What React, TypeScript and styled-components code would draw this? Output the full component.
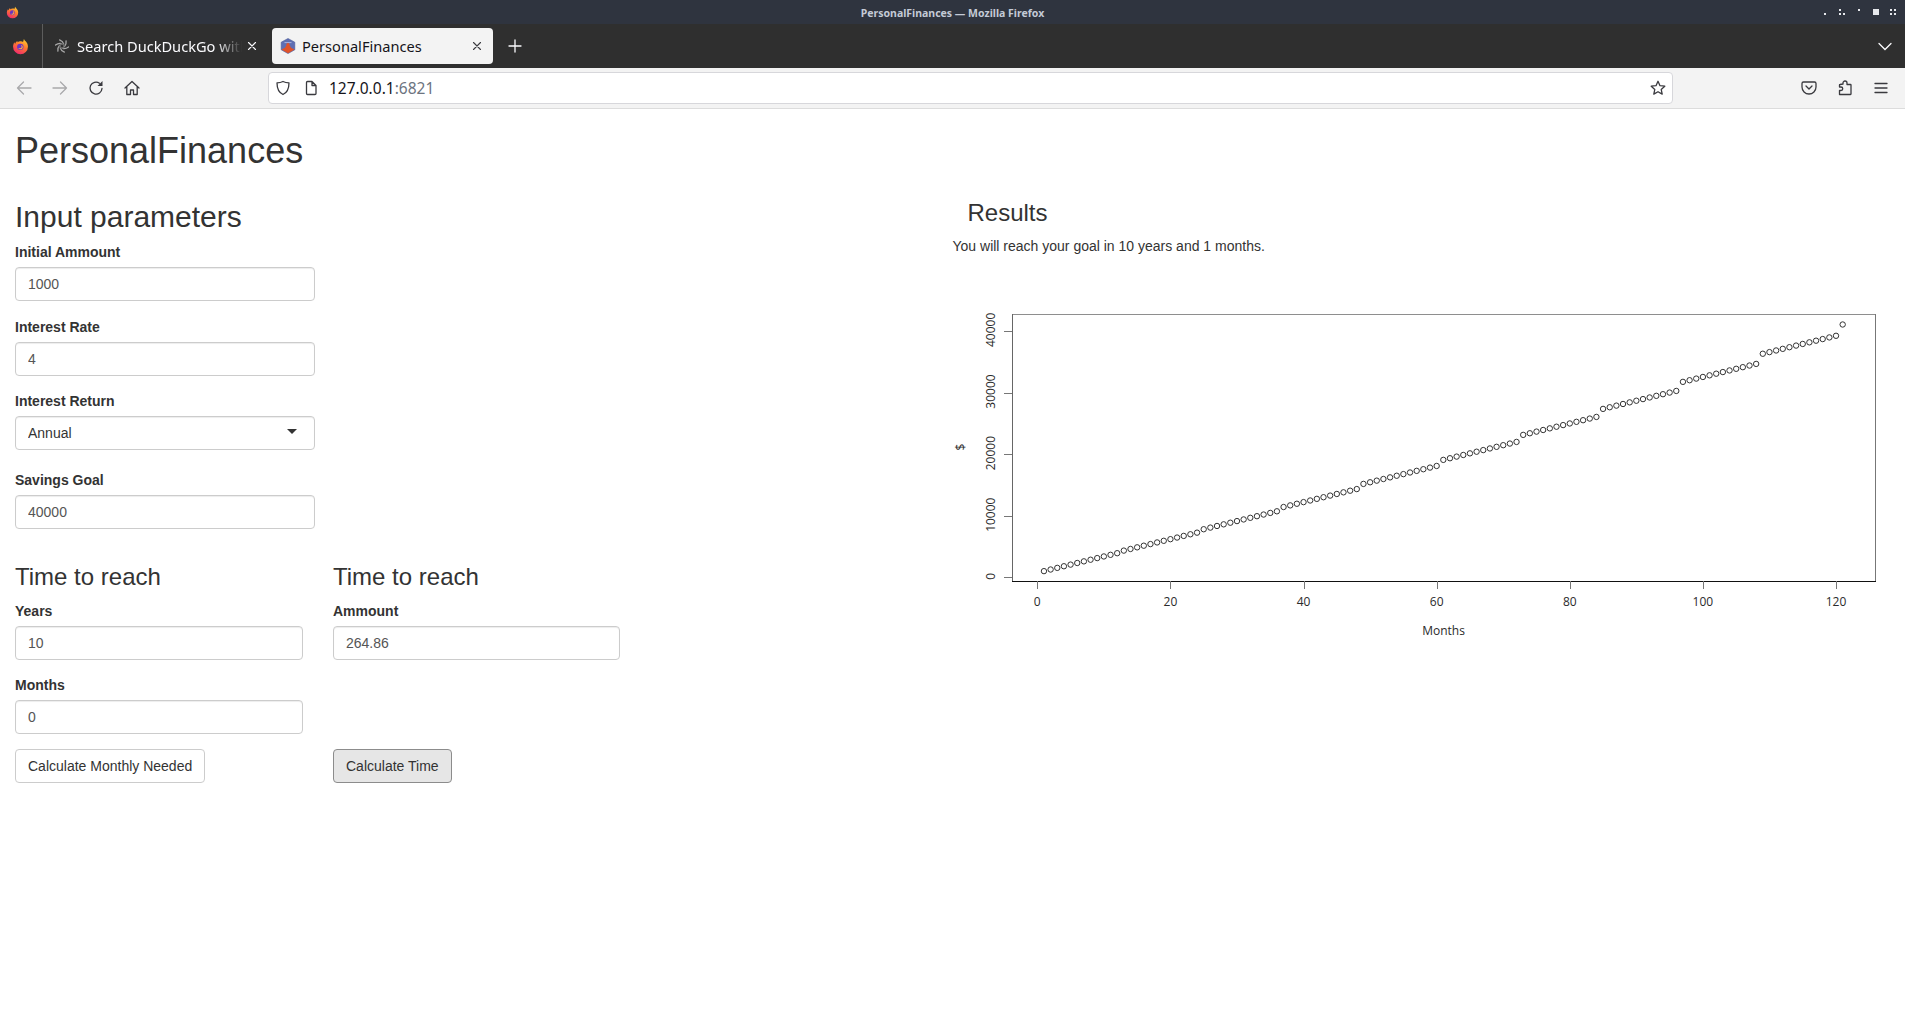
import React from "react";
import styled, { createGlobalStyle } from "styled-components";

const GlobalStyle = createGlobalStyle`
  html, body {
    margin: 0;
    padding: 0;
    background: #fff;
  }
  * {
    box-sizing: border-box;
  }
`;

const Window = styled.div`
  width: 1905px;
  height: 1027px;
  overflow: hidden;
  display: flex;
  flex-direction: column;
  font-family: "Liberation Sans", Arial, sans-serif;
`;

/* browser chrome */

const TitleBar = styled.div`
  height: 24px;
  flex: none;
  background: #2f343f;
  display: grid;
  grid-template-columns: 200px 1fr 200px;
  align-items: center;
  padding: 0 6px;
`;

const TitleText = styled.div`
  text-align: center;
  padding-top: 1px;
  color: #c4cad6;
  font-family: "Noto Sans", "Open Sans", sans-serif;
  font-size: 10.5px;
  font-weight: 700;
`;

const WindowButtons = styled.div`
  display: flex;
  justify-content: flex-end;
  align-items: center;
  gap: 9px;
  padding-right: 2px;
`;

const WindowButton = styled.svg`
  width: 8px;
  height: 8px;
  fill: #e6e8ec;
  display: block;
`;

const TabStrip = styled.div`
  height: 44px;
  flex: none;
  background: #2f2f2f;
  display: flex;
  align-items: center;
  color: #fbfbfe;
`;

const AppButton = styled.div`
  width: 43px;
  height: 44px;
  flex: none;
  border-right: 1px solid #5d5d5d;
  display: flex;
  align-items: center;
  justify-content: center;
  padding-right: 2px;
`;

const Tab = styled.div<{ $active?: boolean }>`
  width: ${(p) => (p.$active ? "221px" : "229px")};
  height: 36px;
  flex: none;
  display: flex;
  align-items: center;
  padding: 0 ${(p) => (p.$active ? "8px" : "12px")} 0 ${(p) => (p.$active ? "8px" : "12px")};
  gap: ${(p) => (p.$active ? "6px" : "8px")};
  border-radius: 4px;
  background: ${(p) => (p.$active ? "#f3f3f3" : "transparent")};
  color: ${(p) => (p.$active ? "#15141a" : "#fbfbfe")};
  font-family: "Noto Sans", "Open Sans", sans-serif;
  font-size: 14.6px;
`;

const TabLabel = styled.span<{ $fade?: boolean }>`
  flex: 1;
  min-width: 0;
  white-space: nowrap;
  overflow: hidden;
  ${(p) =>
    p.$fade &&
    "margin-right: -6px; mask-image: linear-gradient(to right, #000 84%, transparent 100%);"}
`;

const NewTab = styled.div`
  margin-left: 12px;
  width: 20px;
  height: 20px;
  display: flex;
  align-items: center;
  justify-content: center;
`;

const TabSpacer = styled.div`
  flex: 1;
`;

const TabList = styled.div`
  width: 20px;
  margin-right: 10px;
  display: flex;
  justify-content: center;
`;

const NavBar = styled.div`
  height: 41px;
  flex: none;
  background: #f3f3f3;
  border-bottom: 1px solid #dcdcdc;
  display: flex;
  align-items: center;
  padding-bottom: 1px;
`;

const NavButtons = styled.div`
  width: 268px;
  flex: none;
  display: flex;
  align-items: center;
  gap: 20px;
  padding-left: 16px;
`;

const UrlBar = styled.div`
  width: 1405px;
  height: 32px;
  flex: none;
  background: #fff;
  border: 1px solid #d7d7db;
  border-radius: 4px;
  display: flex;
  align-items: center;
  padding: 0 6px;
  font-family: "Noto Sans", "Open Sans", sans-serif;
  font-size: 15.5px;
`;

const UrlIcons = styled.div`
  display: flex;
  align-items: center;
  gap: 12px;
  margin-right: 10px;
`;

const UrlHost = styled.span`
  color: #15141a;
`;

const UrlPort = styled.span`
  color: #6d7480;
  flex: 1;
`;

const NavActions = styled.div`
  flex: 1;
  display: flex;
  align-items: center;
  justify-content: flex-end;
  gap: 20px;
  padding-right: 16px;
`;

const Icon = styled.svg<{ $muted?: boolean }>`
  width: 16px;
  height: 16px;
  display: block;
  flex: none;
  fill: none;
  stroke: ${(p) => (p.$muted ? "#a9a9ab" : "#3a3a3f")};
  stroke-width: 1.3;
  stroke-linecap: round;
  stroke-linejoin: round;
`;

/* shiny page */

const Page = styled.main`
  flex: 1;
  padding: 0 0 0 15px;
  color: #333;
  font-size: 14px;
  line-height: 20px;
`;

const PageTitle = styled.h2`
  margin: 22px 0 8px;
  font-size: 36px;
  font-weight: 500;
  line-height: 39.6px;
`;

const Columns = styled.div`
  display: grid;
  grid-template-columns: 937.5px 952.5px;
`;

const SectionTitle = styled.h2`
  margin: 21px 0 9px;
  font-size: 30px;
  font-weight: 500;
  line-height: 33px;
`;

const SubTitle = styled.h3`
  margin: 20px 0 10.6px;
  font-size: 24px;
  font-weight: 500;
  line-height: 26.4px;
`;

const ResultsTitle = styled(SubTitle)`
  margin: 21px 0 9px 15px;
`;

const Field = styled.div<{ $after: number; $width: number }>`
  width: ${(p) => p.$width}px;
  margin-bottom: ${(p) => p.$after}px;
`;

const Label = styled.label`
  display: block;
  margin-bottom: 5px;
  font-weight: 700;
`;

const TextInput = styled.input`
  display: block;
  width: 100%;
  height: 34px;
  padding: 6px 12px;
  font: inherit;
  color: #555;
  background: #fff;
  border: 1px solid #ccc;
  border-radius: 4px;
  box-shadow: inset 0 1px 1px rgba(0, 0, 0, 0.075);
  outline: none;
`;

const SelectBox = styled.div`
  position: relative;

  &::after {
    content: "";
    position: absolute;
    right: 18px;
    top: 13px;
    border-style: solid;
    border-width: 5px 5px 0;
    border-color: #333 transparent transparent;
  }
`;

const SelectInput = styled.select`
  display: block;
  width: 100%;
  height: 34px;
  padding: 6px 12px;
  font: inherit;
  color: #333;
  background: #fff;
  border: 1px solid #ccc;
  border-radius: 4px;
  box-shadow: inset 0 1px 1px rgba(0, 0, 0, 0.075);
  appearance: none;
  outline: none;
`;

const TimeColumns = styled.div`
  display: grid;
  grid-template-columns: 288px 288px;
  gap: 30px;
`;

const Button = styled.button<{ $pressed?: boolean }>`
  display: inline-block;
  height: 34px;
  padding: 6px 12px;
  font: inherit;
  color: #333;
  background: ${(p) => (p.$pressed ? "#e6e6e6" : "#fff")};
  border: 1px solid ${(p) => (p.$pressed ? "#8c8c8c" : "#ccc")};
  border-radius: 4px;
`;

const ButtonSlot = styled.div<{ $top: number }>`
  padding-top: ${(p) => p.$top}px;
`;

const ResultText = styled.p`
  margin: 0;
  height: 20px;
  padding-top: 1px;
`;

const Chart = styled.svg`
  display: block;
  width: 952px;
  height: 400px;
`;

const TickText = styled.text`
  font-family: "Open Sans", "Noto Sans", sans-serif;
  font-size: 12px;
  fill: #2b2b2b;
`;

// chart is at 953,255 on the page
const xPos = (m: number) => 84.3 + m * 6.656;
const yPos = (v: number) => 322.3 - v * 0.00616;

const savings: number[] = [];
let balance = 1000;
for (let m = 1; m <= 121; m++) {
  savings.push(balance);
  balance += 264.86;
  if (m % 12 === 0) balance += (balance - 264.86) * 0.04;
}

const ResultsChart = () => (
  <Chart viewBox="0 0 952 400">
    <g fill="none" strokeWidth="1">
      <path d="M59.5 59.5H922.5" stroke="#8e8e8e" />
      <path d="M59.5 59V326" stroke="#666" />
      <path d="M922.5 59V326" stroke="#777" />
      <path d="M59 326.5H923" stroke="#111" />
      {[0, 20, 40, 60, 80, 100, 120].map((t) => (
        <path
          key={t}
          d={`M${Math.round(xPos(t)) + 0.5} 326V334`}
          stroke="#777"
        />
      ))}
      {[0, 10000, 20000, 30000, 40000].map((t) => (
        <path
          key={t}
          d={`M51 ${Math.round(yPos(t)) + 0.5}H59`}
          stroke="#777"
        />
      ))}
      {savings.map((v, i) => (
        <circle
          key={i}
          cx={xPos(i + 1)}
          cy={yPos(v)}
          r="2.7"
          stroke="#333"
        />
      ))}
    </g>
    {[0, 20, 40, 60, 80, 100, 120].map((t) => (
      <TickText key={t} x={xPos(t)} y={351} textAnchor="middle">
        {t}
      </TickText>
    ))}
    {[0, 10000, 20000, 30000, 40000].map((t) => (
      <TickText
        key={t}
        textAnchor="middle"
        transform={`translate(42 ${yPos(t) - 1}) rotate(-90)`}
      >
        {t}
      </TickText>
    ))}
    <TickText x={490.5} y={380} textAnchor="middle">
      Months
    </TickText>
    <TickText textAnchor="middle" transform="translate(12 192) rotate(-90)">
      $
    </TickText>
  </Chart>
);

const FirefoxLogo = ({ size }: { size: number }) => (
  <svg width={size} height={size} viewBox="0 0 16 16">
    <defs>
      <linearGradient id="ffx" x1="0.8" y1="0" x2="0.3" y2="1">
        <stop offset="0" stopColor="#ffd02e" />
        <stop offset="0.45" stopColor="#ff7a2f" />
        <stop offset="1" stopColor="#f0286e" />
      </linearGradient>
    </defs>
    <path
      d="M11.2 1c.6 1.1 1 1.6 1.9 2.3.9 1 1.9 2.6 1.900 4.900A7 7 0 0 1 1 8.200c0-1.600.4-3 1.300-4.300.1.700.4 1.100.8 1.400.2-1 .9-2 2-2.500-.1.500 0 .9.300 1.200C6.600 2.900 9.500 3 10.400 3.700 10.700 2.800 11 1.900 11.200 1z"
      fill="url(#ffx)"
    />
    <circle cx="7.800" cy="8.300" r="3" fill="#6a34c4" />
    <path d="M8.300 6.300a2.200 2.200 0 1 1-2.400 3c1 .7 2.700.5 3.100-.6.200-.8-.1-1.700-.7-2.400z" fill="#ffb03a" />
  </svg>
);

const DuckIcon = () => (
  <svg width="14" height="14" viewBox="0 0 14 14" fill="none" stroke="#a8a8a8" strokeWidth="1.300" strokeLinecap="round">
    {[0, 60, 120, 180, 240, 300].map((a) => (
      <path key={a} d="M8.800 5.200C8.300 3.300 6.800 1.800 4.600.9" transform={`rotate(${a} 7 7)`} />
    ))}
    <circle cx="7" cy="7" r="2" stroke="#6a6a6a" />
  </svg>
);

const ShinyIcon = () => (
  <svg width="16" height="16" viewBox="0 0 16 16">
    <path d="M8 .5 14.800 4.200V11.800L8 15.500 1.200 11.800V4.200z" fill="#5f6fb4" stroke="#4b5a97" strokeWidth="0.600" />
    <path d="M4.500 4.600h7" stroke="#aab4dc" strokeWidth="1" />
    <path d="M1.500 11.500 5 9.800 6.300 7.500H9.700L11 9.800l3.500 1.700L8 15.200z" fill="#e0532a" />
    <circle cx="8" cy="6.800" r="1.700" fill="#e0532a" />
  </svg>
);

const ChromeGlyph = ({ d, color, width = 1.3 }: { d: string; color: string; width?: number }) => (
  <svg width="16" height="16" viewBox="0 0 16 16" fill="none" stroke={color} strokeWidth={width} strokeLinecap="round" style={{ flex: "none" }}>
    <path d={d} />
  </svg>
);

export default function App() {
  return (
    <Window>
      <GlobalStyle />
      <TitleBar>
        <FirefoxLogo size={13} />
        <TitleText>PersonalFinances — Mozilla Firefox</TitleText>
        <WindowButtons>
          <WindowButton viewBox="0 0 8 8"><rect x="3" y="5" width="2" height="2" /></WindowButton>
          <WindowButton viewBox="0 0 8 8"><path d="M1 1h2v2H1zM1 5h2v2H1zM5 5h2v2H5z" /></WindowButton>
          <WindowButton viewBox="0 0 8 8"><rect x="3" y="1" width="2" height="2" /></WindowButton>
          <WindowButton viewBox="0 0 8 8"><rect x="1" y="1" width="6" height="6" /></WindowButton>
          <WindowButton viewBox="0 0 8 8"><path d="M1 1h2v2H1zM5 1h2v2H5zM1 5h2v2H1zM5 5h2v2H5z" /></WindowButton>
        </WindowButtons>
      </TitleBar>
      <TabStrip>
        <AppButton>
          <FirefoxLogo size={17} />
        </AppButton>
        <Tab>
          <DuckIcon />
          <TabLabel $fade>Search DuckDuckGo with</TabLabel>
          <ChromeGlyph d="M4.500 4.500l7 7M11.500 4.500l-7 7" color="#fbfbfe" width={1.1} />
        </Tab>
        <Tab $active>
          <ShinyIcon />
          <TabLabel>PersonalFinances</TabLabel>
          <ChromeGlyph d="M4.500 4.500l7 7M11.500 4.500l-7 7" color="#3a3a3f" width={1.1} />
        </Tab>
        <NewTab>
          <ChromeGlyph d="M8 2v12M2 8h12" color="#fbfbfe" />
        </NewTab>
        <TabSpacer />
        <TabList>
          <ChromeGlyph d="M2 5.500l6 6 6-6" color="#fbfbfe" />
        </TabList>
      </TabStrip>
      <NavBar>
        <NavButtons>
          <Icon $muted viewBox="0 0 16 16"><path d="M15 8H1.500M7.500 2 1.500 8l6 6" /></Icon>
          <Icon $muted viewBox="0 0 16 16"><path d="M1 8h13.500M8.500 2l6 6-6 6" /></Icon>
          <Icon viewBox="0 0 16 16">
            <path d="M14 8.500A6 6 0 1 1 11.500 3.200" />
            <path d="M14.500 1v5h-5z" fill="#3a3a3f" stroke="none" />
          </Icon>
          <Icon viewBox="0 0 16 16"><path d="M1 8 8 1.500 15 8M2.800 6.800V14.500H6.500V10H9.500V14.500H13.200V6.800" /></Icon>
        </NavButtons>
        <UrlBar>
          <UrlIcons>
            <Icon viewBox="0 0 16 16"><path d="M8 1.500c2 1 4 1.300 6 1.300 0 5-1 9.500-6 11.700C3 12.300 2 7.800 2 2.800c2 0 4-.3 6-1.300z" /></Icon>
            <Icon viewBox="0 0 16 16"><path d="M3.500 2.500a1 1 0 0 1 1-1H9L13 5.500v8a1 1 0 0 1-1 1H4.500a1 1 0 0 1-1-1zM9 1.500v4h4" /></Icon>
          </UrlIcons>
          <UrlHost>127.0.0.1</UrlHost>
          <UrlPort>:6821</UrlPort>
          <Icon viewBox="0 0 16 16"><path d="M8 1.300l2 4.400 4.800.5-3.600 3.200 1 4.700L8 11.700l-4.200 2.400 1-4.700L1.200 6.200 6 5.700z" /></Icon>
        </UrlBar>
        <NavActions>
          <Icon viewBox="0 0 16 16"><path d="M2.500 2h11A1.500 1.500 0 0 1 15 3.500V7A7 7 0 0 1 1 7V3.500A1.500 1.500 0 0 1 2.500 2zM5 6l3 3 3-3" /></Icon>
          <Icon viewBox="0 0 16 16"><path d="M6 4V3a2 2 0 0 1 4 0v1.500h3.500a.5.500 0 0 1 .5.500v9a.5.500 0 0 1-.5.500H2.500v-4H4a1.500 1.500 0 0 0 0-3.500H2.500V5a.5.500 0 0 1 .5-.5z" /></Icon>
          <Icon viewBox="0 0 16 16"><path d="M2 3.500h12M2 8h12M2 12.500h12" /></Icon>
        </NavActions>
      </NavBar>
      <Page>
        <PageTitle>PersonalFinances</PageTitle>
        <Columns>
          <section>
            <SectionTitle>Input parameters</SectionTitle>
            <Field $width={300} $after={16}>
              <Label>Initial Ammount</Label>
              <TextInput defaultValue="1000" />
            </Field>
            <Field $width={300} $after={15}>
              <Label>Interest Rate</Label>
              <TextInput defaultValue="4" />
            </Field>
            <Field $width={300} $after={20}>
              <Label>Interest Return</Label>
              <SelectBox>
                <SelectInput defaultValue="Annual">
                  <option>Annual</option>
                </SelectInput>
              </SelectBox>
            </Field>
            <Field $width={300} $after={15}>
              <Label>Savings Goal</Label>
              <TextInput defaultValue="40000" />
            </Field>
            <TimeColumns>
              <div>
                <SubTitle>Time to reach</SubTitle>
                <Field $width={288} $after={15}>
                  <Label>Years</Label>
                  <TextInput defaultValue="10" />
                </Field>
                <Field $width={288} $after={15}>
                  <Label>Months</Label>
                  <TextInput defaultValue="0" />
                </Field>
                <Button>Calculate Monthly Needed</Button>
              </div>
              <div>
                <SubTitle>Time to reach</SubTitle>
                <Field $width={287} $after={0}>
                  <Label>Ammount</Label>
                  <TextInput defaultValue="264.86" />
                </Field>
                <ButtonSlot $top={89}>
                  <Button $pressed>Calculate Time</Button>
                </ButtonSlot>
              </div>
            </TimeColumns>
          </section>
          <section>
            <ResultsTitle>Results</ResultsTitle>
            <ResultText>You will reach your goal in 10 years and 1 months.</ResultText>
            <ResultsChart />
          </section>
        </Columns>
      </Page>
    </Window>
  );
}
